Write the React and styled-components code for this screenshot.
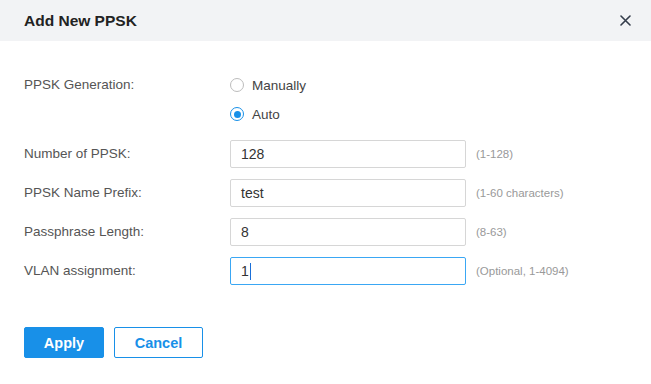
import { useState } from "react";
import styled, { createGlobalStyle } from "styled-components";

const GlobalStyle = createGlobalStyle`
  html, body {
    margin: 0;
    padding: 0;
    background: #fff;
  }
  body {
    font-family: "Liberation Sans", Arial, sans-serif;
  }
`;

const fields = [
  { label: "Number of PPSK:", value: "128", hint: "(1-128)" },
  { label: "PPSK Name Prefix:", value: "test", hint: "(1-60 characters)" },
  { label: "Passphrase Length:", value: "8", hint: "(8-63)" },
  { label: "VLAN assignment:", value: "1", hint: "(Optional, 1-4094)", focused: true },
];

const App = () => {
  const [mode, setMode] = useState("auto");

  return (
    <>
      <GlobalStyle />
      <StyledDialog>
        <Header>
          <Title>Add New PPSK</Title>
          <CloseButton aria-label="close">
            <svg width="11" height="11" viewBox="0 0 11 11">
              <path d="M1 1L10 10M10 1L1 10" stroke="#343d4b" strokeWidth="1.6" strokeLinecap="round" />
            </svg>
          </CloseButton>
        </Header>

        <Body>
          <Row>
            <Label $top>PPSK Generation:</Label>
            <RadioGroup>
              <RadioOption onClick={() => setMode("manual")}>
                <Radio $checked={mode === "manual"} />
                Manually
              </RadioOption>
              <RadioOption onClick={() => setMode("auto")}>
                <Radio $checked={mode === "auto"} />
                Auto
              </RadioOption>
            </RadioGroup>
          </Row>

          <Fields>
            {fields.map((f) => (
              <Row key={f.label}>
                <Label>{f.label}</Label>
                <FieldBox $focused={f.focused}>
                  {f.value}
                  {f.focused && <Caret />}
                </FieldBox>
                <Hint>{f.hint}</Hint>
              </Row>
            ))}
          </Fields>

          <Actions>
            <Button $primary>Apply</Button>
            <Button>Cancel</Button>
          </Actions>
        </Body>
      </StyledDialog>
    </>
  );
};
export default App;

const StyledDialog = styled.div`
  width: 651px;
  height: 384px;
  background: #fff;
`;

const Header = styled.div`
  box-sizing: border-box;
  height: 41px;
  display: flex;
  align-items: center;
  justify-content: space-between;
  padding: 0 19px 0 24px;
  background: #f2f3f5;
`;

const Title = styled.div`
  font-size: 15.5px;
  font-weight: bold;
  color: #222;
`;

const CloseButton = styled.button`
  display: flex;
  align-items: center;
  justify-content: center;
  width: 13px;
  height: 13px;
  padding: 0;
  border: none;
  background: none;
  cursor: pointer;
`;

const Body = styled.div`
  padding: 34px 24px 0;
`;

const Row = styled.div`
  display: flex;
  align-items: ${(p) => (p.$top ? "flex-start" : "center")};
`;

const Label = styled.div`
  width: 206px;
  flex-shrink: 0;
  font-size: 13.5px;
  color: #555;
  line-height: 20px;
  align-self: ${(p) => (p.$top ? "flex-start" : "center")};
`;

const RadioGroup = styled.div`
  display: flex;
  flex-direction: column;
  gap: 9px;
`;

const RadioOption = styled.label`
  display: flex;
  align-items: center;
  gap: 8px;
  height: 20px;
  font-size: 13.5px;
  color: #444;
  cursor: pointer;
`;

const Radio = styled.span`
  box-sizing: border-box;
  width: 14px;
  height: 14px;
  border-radius: 50%;
  border: 1px solid ${(p) => (p.$checked ? "#1890e8" : "#bcbcbc")};
  display: flex;
  align-items: center;
  justify-content: center;

  &::after {
    content: "";
    display: ${(p) => (p.$checked ? "block" : "none")};
    width: 7px;
    height: 7px;
    border-radius: 50%;
    background: #1890e8;
  }
`;

const Fields = styled.div`
  display: flex;
  flex-direction: column;
  gap: 11px;
  margin-top: 16px;
`;

const FieldBox = styled.div`
  box-sizing: border-box;
  width: 236px;
  height: 28px;
  display: flex;
  align-items: center;
  padding: 0 10px;
  border: 1px solid ${(p) => (p.$focused ? "#3aa7f4" : "#d6d6d6")};
  border-radius: 2px;
  font-size: 14px;
  color: #333;
  background: #fff;
`;

const Caret = styled.span`
  display: inline-block;
  width: 1px;
  height: 17px;
  margin-left: 1px;
  background: #1a6fd8;
`;

const Hint = styled.div`
  margin-left: 10px;
  font-size: 11.5px;
  color: #999;
`;

const Actions = styled.div`
  display: flex;
  gap: 10px;
  margin-top: 42px;
`;

const Button = styled.button`
  box-sizing: border-box;
  height: 31px;
  width: ${(p) => (p.$primary ? "80px" : "89px")};
  border-radius: 2px;
  border: 1px solid #1890e8;
  background: ${(p) => (p.$primary ? "#1890e8" : "#fff")};
  color: ${(p) => (p.$primary ? "#fff" : "#1890e8")};
  font-family: "Liberation Sans", Arial, sans-serif;
  font-size: 14.5px;
  font-weight: bold;
  cursor: pointer;
`;
